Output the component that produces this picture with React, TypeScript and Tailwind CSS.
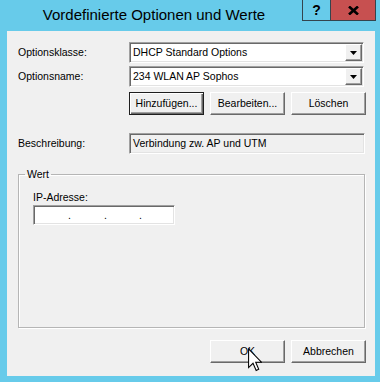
import React from "react";

const raised =
  "border border-t-white border-l-white border-r-[#696969] border-b-[#696969] shadow-[inset_-1px_-1px_0_#a0a0a0] bg-[#f0f0f0]";
const sunken =
  "border border-t-[#a0a0a0] border-l-[#a0a0a0] border-r-white border-b-white shadow-[inset_1px_1px_0_#696969,inset_-1px_-1px_0_#e3e3e3]";

function Btn({ label, focused }: { label: string; focused?: boolean }) {
  const cls = focused
    ? "border border-[#1e1e1e] shadow-[inset_1px_1px_0_#fff,inset_-1px_-1px_0_#696969,inset_-2px_-2px_0_#a0a0a0] bg-[#f0f0f0]"
    : raised;
  return (
    <div className={`${cls} w-[75px] h-[23px] flex items-center justify-center text-black`}>
      {label}
    </div>
  );
}

function Combo({ value }: { value: string }) {
  return (
    <div className={`${sunken} bg-white w-[235px] h-[21px] flex items-stretch p-[1px]`}>
      <div className="flex-1 flex items-center pl-[2px] text-black whitespace-nowrap">{value}</div>
      <div className={`${raised} w-[17px] flex items-center justify-center`}>
        <svg width="7" height="4" viewBox="0 0 7 4">
          <polygon points="0,0 7,0 3.5,4" fill="#000" />
        </svg>
      </div>
    </div>
  );
}

export default function App() {
  return (
    <div className="relative w-[380px] h-[382px] bg-[#67cbea] flex flex-col font-['Liberation_Sans',Arial,sans-serif] text-[10.5px] leading-[13px] overflow-hidden">
      {/* Title bar */}
      <div className="h-[31px] flex items-start shrink-0">
        <div className="flex-1 flex justify-center pl-[6px]">
          <div className="mt-[7px] text-[15px] leading-[15px] text-[#000] whitespace-nowrap">
            Vordefinierte Optionen und Werte
          </div>
        </div>
        <div className="flex mr-[4px]">
          <div className="w-[29px] h-[21px] border-x border-b border-[#34444d] flex items-center justify-center text-[14px] font-bold leading-none text-black">
            ?
          </div>
          <div className="w-[45px] h-[21px] border-r border-b border-[#34444d] bg-[#c75050] flex items-center justify-center">
            <svg width="11" height="9" viewBox="0 0 11 9">
              <path d="M1 0.5 L10 8.5 M10 0.5 L1 8.5" stroke="#000" strokeWidth="2.6" />
            </svg>
          </div>
        </div>
      </div>

      {/* Client area */}
      <div className="ml-[7px] mr-[5px] h-[345px] bg-[#f0f0f0] flex flex-col pl-[11px] pt-[11px] text-black">
        <div className="flex items-center h-[21px]">
          <div className="w-[111px]">Optionsklasse:</div>
          <Combo value="DHCP Standard Options" />
        </div>
        <div className="flex items-center h-[21px] mt-[3px]">
          <div className="w-[111px]">Optionsname:</div>
          <Combo value="234 WLAN AP Sophos" />
        </div>
        <div className="flex gap-[6px] ml-[111px] mt-[5px]">
          <Btn label="Hinzufügen..." focused />
          <Btn label="Bearbeiten..." />
          <Btn label="Löschen" />
        </div>
        <div className="flex items-center mt-[18px]">
          <div className="w-[111px]">Beschreibung:</div>
          <div className={`${sunken} w-[236px] h-[21px] pl-[3px] pt-[3px] whitespace-nowrap`}>
            Verbindung zw. AP und UTM
          </div>
        </div>

        <fieldset className="mt-[14px] w-[347px] h-[160px] border border-[#b5b5b5] shadow-[1px_1px_0_#fff,inset_1px_1px_0_#fff]">
          <legend className="ml-[6px] px-[2px] leading-[13px]">Wert</legend>
          <div className="pl-[14px] mt-[10px]">IP-Adresse:</div>
          <div className={`${sunken} ml-[14px] mt-[1px] w-[142px] h-[20px] bg-white flex items-center pl-[1px]`}>
            <span className="w-[33px]" />
            <span className="w-[3px] text-center">.</span>
            <span className="w-[33px]" />
            <span className="w-[3px] text-center">.</span>
            <span className="w-[32px]" />
            <span className="w-[3px] text-center">.</span>
          </div>
        </fieldset>

        <div className="flex gap-[6px] ml-[192px] mt-[12px]">
          <Btn label="OK" />
          <Btn label="Abbrechen" />
        </div>
      </div>

      {/* Mouse cursor */}
      <svg
        className="absolute left-[248px] top-[348px]"
        width="14"
        height="24"
        viewBox="0 0 12 20"
      >
        <path
          d="M0.5 0.5 L0.5 16.5 L4.3 12.8 L7 19 L9.2 18 L6.6 11.9 L11.5 11.9 Z"
          fill="#fff"
          stroke="#000"
          strokeWidth="0.9"
          strokeLinejoin="miter"
        />
      </svg>
    </div>
  );
}
